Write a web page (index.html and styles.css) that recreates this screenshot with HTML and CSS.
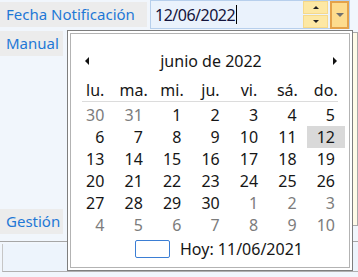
FILE: index.html
```html
<!DOCTYPE html>
<html lang="es">
  <head>
    <meta charset="UTF-8" />
    <title>Fecha Notificación</title>
    <link rel="stylesheet" href="styles.css">
  </head>
  <body>
    <div class="form">
      <div class="label wide">Fecha Notificación</div>
      <div class="dateField">
        <span class="dateText">12/06/2022</span><span class="caret"></span>
        <div class="spin">
          <div class="spinBtn"><span class="up"></span></div>
          <div class="spinBtn"><span class="down"></span></div>
        </div>
        <div class="dropBtn"><span class="down gray"></span></div>
      </div>
      <div class="label">Manual</div>
      <div class="memo"></div>
      <div class="label gestion">Gestión</div>
    </div>
    <div class="footer">
      <div class="band"></div>
    </div>

    <div class="popup">
      <div class="calendar">
        <div class="calHeader">
          <span class="arrow left"></span>
          <span class="month">junio de 2022</span>
          <span class="arrow right"></span>
        </div>
        <div class="weekdays">
          <span>lu.</span><span>ma.</span><span>mi.</span><span>ju.</span><span>vi.</span><span>sá.</span><span>do.</span>
        </div>
        <div class="rule"></div>
        <div class="days">
          <span class="other">30</span><span class="other">31</span><span>1</span><span>2</span><span>3</span><span>4</span><span>5</span>
          <span>6</span><span>7</span><span>8</span><span>9</span><span>10</span><span>11</span><span class="selected">12</span>
          <span>13</span><span>14</span><span>15</span><span>16</span><span>17</span><span>18</span><span>19</span>
          <span>20</span><span>21</span><span>22</span><span>23</span><span>24</span><span>25</span><span>26</span>
          <span>27</span><span>28</span><span>29</span><span>30</span><span class="other">1</span><span class="other">2</span><span class="other">3</span>
          <span class="other">4</span><span class="other">5</span><span class="other">6</span><span class="other">7</span><span class="other">8</span><span class="other">9</span><span class="other">10</span>
        </div>
        <div class="today">
          <span class="todayBox"></span>
          <span>Hoy: 11/06/2021</span>
        </div>
      </div>
    </div>
  </body>
</html>
```

FILE: styles.css
```css
body {
  margin: 0;
  width: 358px;
  height: 277px;
  overflow: hidden;
  background-color: #f1f6fc;
  font-family: "Noto Sans", sans-serif;
  position: relative;
}

.form {
  display: grid;
  grid-template-columns: 150px 1fr;
  grid-template-rows: 30px 178px 33px;
}

.label {
  background-color: #ececec;
  color: #1f78d6;
  font-size: 15px;
  height: 25px;
  line-height: 25px;
  padding-left: 6px;
  width: 57px;
  margin-top: 1px;
  white-space: nowrap;
}

.label.wide {
  width: 141px;
  margin-top: 2px;
}

.gestion {
  grid-column: 1;
  margin-top: 1px;
}

.dateField {
  display: flex;
  align-items: center;
  width: 200px;
  height: 29px;
  box-sizing: border-box;
  border: 1px solid #b7cfec;
  background-color: #eaf2fc;
  padding-left: 4px;
  position: relative;
}

.dateText {
  font-size: 16px;
  letter-spacing: -0.5px;
  color: #14143c;
}

.caret {
  width: 1px;
  height: 19px;
  background-color: #000;
  margin-left: 1px;
}

.spin {
  margin-left: auto;
  display: flex;
  flex-direction: column;
  gap: 1px;
  align-self: stretch;
  width: 25px;
}

.spinBtn {
  flex: 1;
  background-color: #fde8a4;
  border: 1px solid #f6d98a;
  display: flex;
  align-items: center;
  justify-content: center;
}

.up {
  border-left: 3px solid transparent;
  border-right: 3px solid transparent;
  border-bottom: 3px solid #222;
}

.down {
  border-left: 3px solid transparent;
  border-right: 3px solid transparent;
  border-top: 3px solid #222;
}

.down.gray {
  border-left-width: 4px;
  border-right-width: 4px;
  border-top: 4px solid #707070;
}

.dropBtn {
  width: 19px;
  height: 28px;
  box-sizing: border-box;
  margin: 0 0 0 2px;
  border: 2px solid #e4a24a;
  background-color: #fddc8e;
  display: flex;
  align-items: center;
  justify-content: center;
}

.memo {
  grid-row: 2 / 4;
  grid-column: 2;
  margin-top: 2px;
  height: 194px;
  background-color: #fffbe8;
  border: 1px solid #a9a9a9;
  box-sizing: border-box;
}

.footer {
  border-top: 1px solid #a6a6a6;
  padding: 2px 0 0 2px;
}

.band {
  height: 27px;
  background-color: #edf4fc;
  border-left: 1px solid #c6c6c6;
  border-bottom: 1px solid #b0b0b0;
}

/* dropdown calendar */
.popup {
  position: absolute;
  left: 67px;
  top: 30px;
  width: 286px;
  height: 241px;
  box-sizing: border-box;
  border: 1px solid #7e7e7e;
  background-color: #fff;
  padding: 2px;
}

.calendar {
  height: 100%;
  box-sizing: border-box;
  border: 1px solid #b3b3b3;
  color: #161616;
  font-size: 16px;
}

.calHeader {
  display: flex;
  align-items: center;
  justify-content: space-between;
  height: 26px;
  margin-top: 14px;
  padding: 0 12px 0 14px;
}

.month {
  line-height: 26px;
}

.arrow {
  width: 0;
  height: 0;
  border-top: 4px solid transparent;
  border-bottom: 4px solid transparent;
}

.arrow.left {
  border-right: 4px solid #111;
}

.arrow.right {
  border-left: 4px solid #111;
}

.weekdays {
  display: grid;
  grid-template-columns: repeat(7, 1fr);
  margin: 5px 4px 0 5px;
  height: 22px;
  line-height: 22px;
  text-align: center;
}

.rule {
  height: 1px;
  background-color: #dcdcdc;
  margin: 0 11px 2px 11px;
}

.days {
  display: grid;
  grid-template-columns: repeat(7, 1fr);
  grid-auto-rows: 22px;
  margin: 0 4px 0 5px;
}

.days span {
  text-align: right;
  padding-right: 10px;
  line-height: 22px;
}

.days .other {
  color: #7c7c7c;
}

.days .selected {
  background-color: #d9d9d9;
}

.today {
  display: flex;
  align-items: center;
  justify-content: center;
  gap: 10px;
  height: 22px;
  margin-top: 2px;
  padding-left: 18px;
}

.todayBox {
  width: 35px;
  height: 18px;
  box-sizing: border-box;
  border: 1px solid #3b7ed4;
  border-radius: 2px;
}
```
